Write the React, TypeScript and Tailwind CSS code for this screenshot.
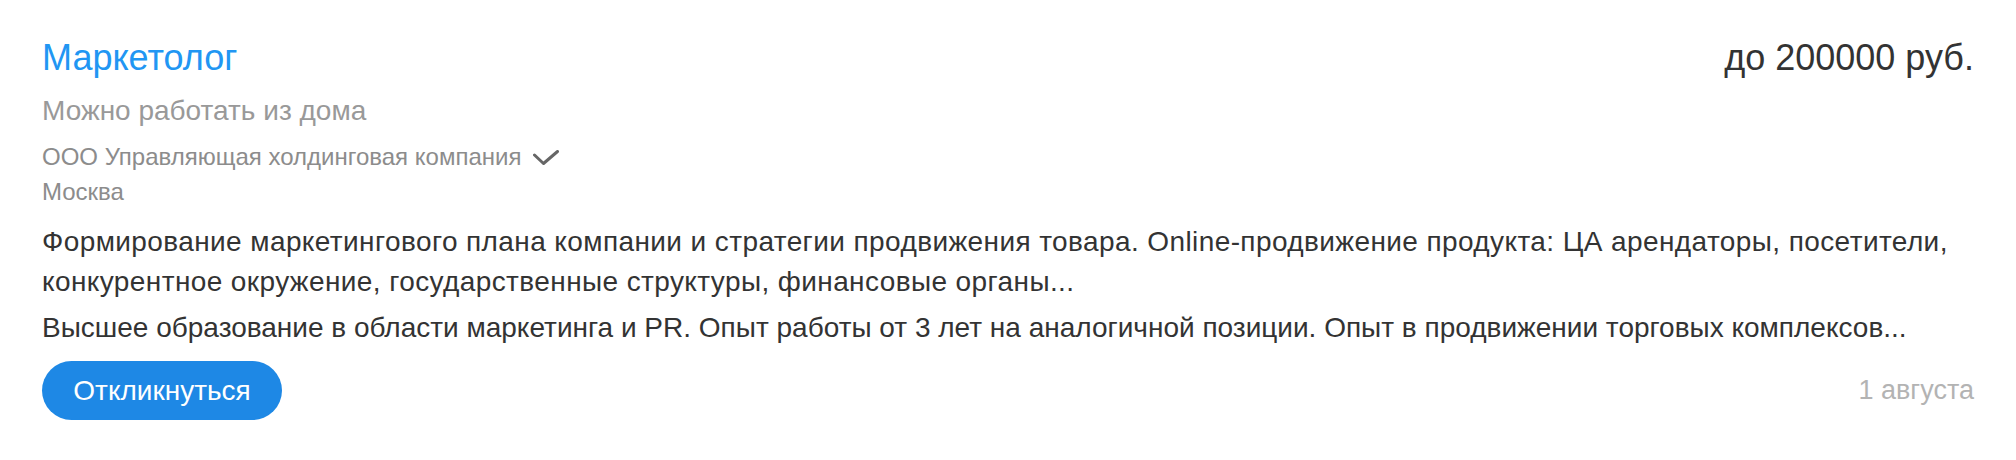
import React from 'react';

function CheckIcon() {
    return (
        <svg viewBox="0 0 26 15" className="ml-[12px] h-[15px] w-[26px]" fill="none">
            <path
                d="M1.5 5 L10.5 13.5 L24.5 1.5"
                stroke="#666"
                strokeWidth="3"
                strokeLinecap="round"
                strokeLinejoin="round"
            />
        </svg>
    );
}

export default function App() {
    return (
        <div className="min-h-screen bg-white font-['Liberation_Sans',Arial,sans-serif]">
            <div className="px-[42px] pt-[36px] pb-[40px]">
                <div className="flex items-baseline justify-between">
                    <a href="#" className="text-[36px] leading-[44px] text-[#2196f3]">
                        Маркетолог
                    </a>
                    <div className="text-[36px] leading-[44px] text-[#333]">до 200000 руб.</div>
                </div>
                <div className="mt-[14px] text-[28px] leading-[34px] text-[#999]">
                    Можно работать из дома
                </div>
                <div className="mt-[14px] flex items-center text-[24px] leading-[30px] text-[#8c8c8c]">
                    <span>ООО Управляющая холдинговая компания</span>
                    <CheckIcon />
                </div>
                <div className="mt-[5px] text-[24px] leading-[30px] text-[#8c8c8c]">Москва</div>
                <div className="mt-[15px] text-[28px] leading-[40px] text-[#333]">
                    <p className="tracking-[0.4px]">
                        Формирование маркетингового плана компании и стратегии продвижения товара.
                        Online-продвижение продукта: ЦА арендаторы, посетители, конкурентное
                        окружение, государственные структуры, финансовые органы...
                    </p>
                    <p className="mt-[6px]">
                        Высшее образование в области маркетинга и PR. Опыт работы от 3 лет на
                        аналогичной позиции. Опыт в продвижении торговых комплексов...
                    </p>
                </div>
                <div className="mt-[13px] flex items-center justify-between">
                    <button className="h-[59px] w-[240px] rounded-full bg-[#1e88e5] text-[28px] text-white">
                        Откликнуться
                    </button>
                    <div className="text-[27px] text-[#b3b3b3]">1 августа</div>
                </div>
            </div>
        </div>
    );
}
